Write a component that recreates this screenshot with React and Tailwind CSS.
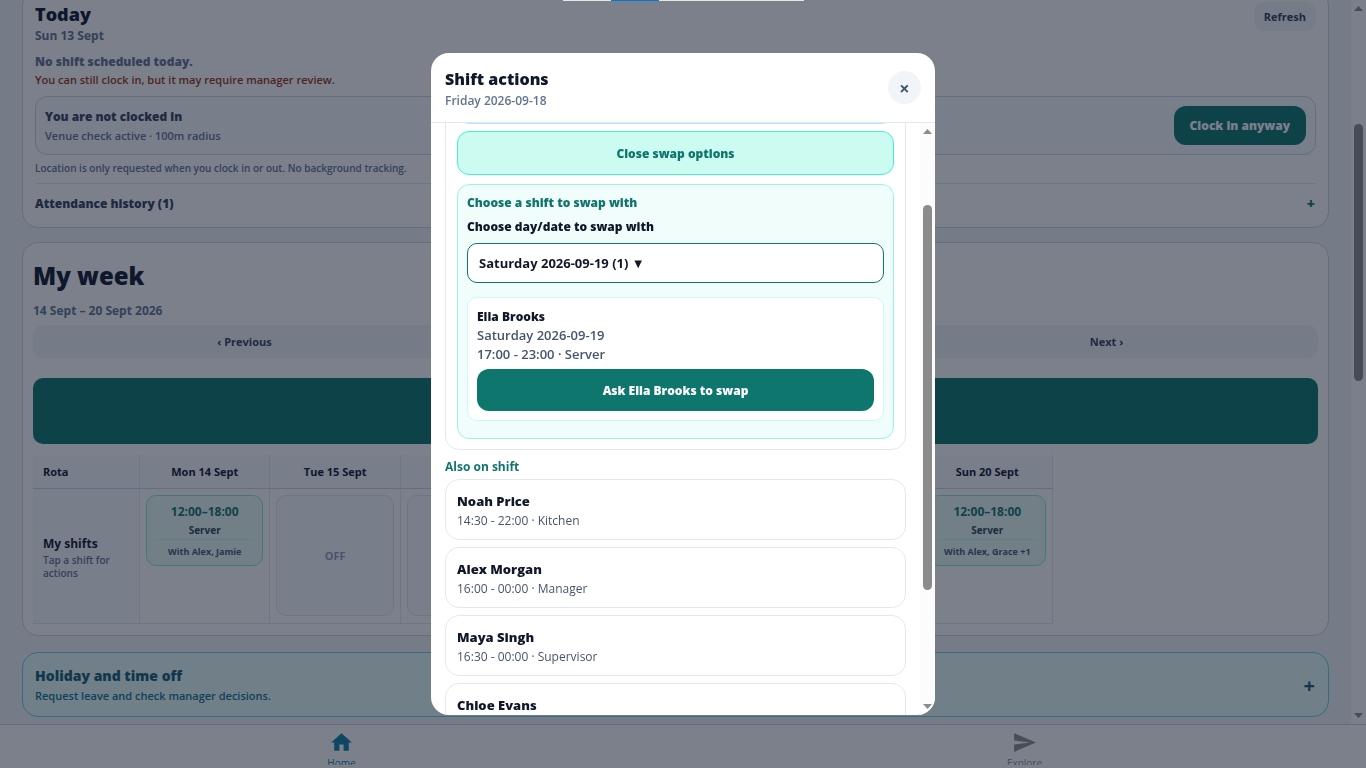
import React, { useState } from 'react';
import { MdHome, MdSend } from 'react-icons/md';

const days = [
  { label: 'Mon 14 Sept', time: '12:00–18:00', role: 'Server', team: 'With Alex, Jamie' },
  { label: 'Tue 15 Sept' },
  { label: 'Wed 16 Sept' },
  { label: 'Thu 17 Sept' },
  { label: 'Fri 18 Sept' },
  { label: 'Sat 19 Sept' },
  { label: 'Sun 20 Sept', time: '12:00–18:00', role: 'Server', team: 'With Alex, Grace +1' },
];

const coworkers = [
  { name: 'Noah Price', detail: '14:30 - 22:00 · Kitchen' },
  { name: 'Alex Morgan', detail: '16:00 - 00:00 · Manager' },
  { name: 'Maya Singh', detail: '16:30 - 00:00 · Supervisor' },
  { name: 'Chloe Evans', detail: '17:00 - 23:00 · Server' },
];

const ScrollArrow = ({ down }) => (
  <svg viewBox="0 0 9 5" className={`h-[5px] w-[9px] shrink-0 fill-[#8b8b8b] ${down ? 'rotate-180' : ''}`}>
    <path d="M4.5 0 9 5H0z" />
  </svg>
);

const TodayCard = () => (
  <section className="rounded-2xl border border-[#cbd5e1] bg-white p-3">
    <div className="flex items-start justify-between">
      <div>
        <h2 className="text-lg leading-6 font-extrabold text-slate-900">Today</h2>
        <p className="text-xs leading-5 font-bold text-slate-500">Sun 13 Sept</p>
      </div>
      <button className="rounded-[10px] bg-slate-100 px-[10px] text-[11px] leading-[29px] font-bold text-slate-700">
        Refresh
      </button>
    </div>

    <p className="mt-[7px] text-xs leading-[18px] font-extrabold text-slate-500">No shift scheduled today.</p>
    <p className="text-[11px] leading-[18px] font-semibold text-[#9a3412]">
      You can still clock in, but it may require manager review.
    </p>

    <div className="mt-[7px] flex items-center justify-between rounded-xl border border-[#cbd5e1] bg-slate-50 p-[9px]">
      <div>
        <p className="text-xs leading-[19px] font-extrabold text-slate-700">You are not clocked in</p>
        <p className="text-[11px] leading-[19px] font-semibold text-slate-500">Venue check active · 100m radius</p>
      </div>
      <button className="rounded-xl bg-[#0f766e] px-4 text-xs leading-[39px] font-extrabold text-white">
        Clock in anyway
      </button>
    </div>

    <p className="mt-[5px] text-[10px] leading-4 font-semibold text-slate-500">
      Location is only requested when you clock in or out. No background tracking.
    </p>

    <button className="mt-[7px] flex w-full items-center justify-between border-t border-slate-200 pt-[9px] pr-px text-xs leading-[22px] font-extrabold text-slate-700">
      <span>Attendance history (1)</span>
      <span className="text-sm leading-[22px] text-[#0f766e]">+</span>
    </button>
  </section>
);

const DayCell = ({ day }) => {
  if (!day.time) {
    return (
      <div className="flex h-[121px] items-center justify-center rounded-[10px] border border-slate-200 bg-slate-50 pt-[2px] text-[11px] font-bold text-slate-400">
        OFF
      </div>
    );
  }

  return (
    <button className="block h-[71px] w-full rounded-[10px] border border-[#86efc5] bg-[#ecfdf5] px-[7px] pt-[3px]">
      <span className="block text-xs leading-[18px] font-bold text-[#0f766e]">{day.time}</span>
      <span className="block text-[10px] leading-[18px] font-bold text-slate-700">{day.role}</span>
      <span className="block border-t border-[#ccfbf1] pt-[3px] text-[9px] leading-[18px] font-bold text-slate-600">
        {day.team}
      </span>
    </button>
  );
};

const WeekCard = () => (
  <section className="mt-[14px] rounded-2xl border border-[#cbd5e1] bg-white px-[10px] pb-[11px]">
    <h2 className="pt-[15px] text-2xl leading-9 font-extrabold text-slate-900">My week</h2>
    <p className="mt-2 text-xs leading-[18px] font-bold text-slate-500">14 Sept – 20 Sept 2026</p>

    <div className="mt-[5px] grid grid-cols-3 gap-2 text-[11px] leading-[33px] font-bold text-slate-700">
      <button className="rounded-[10px] bg-slate-100">‹ Previous</button>
      <button className="col-start-3 rounded-[10px] bg-slate-100">Next ›</button>
    </div>

    <div className="mt-5 h-[66px] rounded-[10px] bg-[#0f766e]" />

    <table className="mt-[11px] w-[1020px] table-fixed border-separate border-spacing-0">
      <thead>
        <tr className="bg-slate-50 text-[11px] text-slate-900">
          <th className="h-[34px] w-[107px] border-r border-b border-slate-200 border-b-slate-300 pt-[2px] pl-[10px] text-left font-bold">
            Rota
          </th>
          {days.map((day) => (
            <th key={day.label} className="border-r border-b border-slate-200 border-b-slate-300 pt-[2px] font-bold">
              {day.label}
            </th>
          ))}
        </tr>
      </thead>
      <tbody>
        <tr>
          <th className="h-[135px] border-r border-b border-slate-200 bg-slate-50 pt-[2px] pl-[10px] text-left">
            <p className="text-xs leading-[18px] font-bold text-slate-900">My shifts</p>
            <p className="mt-px text-[10px] leading-[13px] font-semibold text-slate-500">
              Tap a shift for
              <br />
              actions
            </p>
          </th>
          {days.map((day) => (
            <td key={day.label} className="border-r border-b border-slate-200 p-[6px] align-top">
              <DayCell day={day} />
            </td>
          ))}
        </tr>
      </tbody>
    </table>
  </section>
);

const HolidayCard = () => (
  <section className="mt-4 flex h-[65px] items-center justify-between rounded-2xl border border-[#67d3e0] bg-[#e8fcfb] px-3 pt-[2px]">
    <div>
      <h2 className="text-sm leading-5 font-extrabold text-[#155e75]">Holiday and time off</h2>
      <p className="text-[11px] leading-5 font-semibold text-[#0e7490]">Request leave and check manager decisions.</p>
    </div>
    <button className="pr-px text-xl font-bold text-[#155e75]" aria-label="Open holiday and time off">
      +
    </button>
  </section>
);

const BottomNav = () => (
  <nav className="grid h-11 shrink-0 grid-cols-2 border-t border-slate-300 bg-white text-[10px] leading-4">
    <a href="#home" className="flex h-10 flex-col items-center overflow-hidden pt-[5px] text-[#0e7fa8]">
      <MdHome className="size-[25px] shrink-0" />
      <span>Home</span>
    </a>
    <a href="#explore" className="flex h-10 flex-col items-center overflow-hidden pt-[5px] text-[#8e8e8e]">
      <MdSend className="size-[25px] shrink-0" />
      <span>Explore</span>
    </a>
  </nav>
);

const ShiftModal = () => {
  const [swapDate, setSwapDate] = useState('2026-09-19');

  return (
    <div
      role="dialog"
      aria-label="Shift actions"
      className="flex h-[calc(100vh-106px)] w-full max-w-[504px] flex-col overflow-hidden rounded-[18px] bg-white"
    >
      <header className="flex h-[70px] shrink-0 items-center justify-between border-b border-slate-200 px-[14px]">
        <div className="pt-[2px]">
          <h2 className="text-base leading-6 font-extrabold text-slate-900">Shift actions</h2>
          <p className="text-xs leading-5 font-semibold text-slate-500">Friday 2026-09-18</p>
        </div>
        <button
          aria-label="Close"
          className="flex size-[33px] items-center justify-center rounded-full bg-slate-100 pt-px text-lg font-bold text-slate-600"
        >
          ×
        </button>
      </header>

      <div className="flex min-h-0 flex-1">
        <div className="flex-1 overflow-hidden px-[14px]">
          <div className="-mt-[55px] rounded-[14px] border border-slate-200 px-[11px] pt-[11px] pb-[10px]">
            <div className="h-11 rounded-xl border border-sky-200 bg-sky-50" />
            <button className="mt-[7px] h-11 w-full rounded-xl border border-teal-300 bg-teal-100 pt-[2px] text-xs font-extrabold text-[#0f766e]">
              Close swap options
            </button>

            <div className="mt-[9px] rounded-xl border border-teal-200 bg-teal-50 px-[9px] pt-[9px] pb-[17px]">
              <p className="text-xs leading-[18px] font-extrabold text-[#0f766e]">Choose a shift to swap with</p>
              <label htmlFor="swap-date" className="mt-[6px] block text-xs leading-[18px] font-extrabold text-slate-900">
                Choose day/date to swap with
              </label>
              <select
                id="swap-date"
                value={swapDate}
                onChange={(e) => setSwapDate(e.target.value)}
                className="mt-[7px] block h-10 w-full appearance-none rounded-[10px] border border-[#0f766e] bg-white px-[11px] pt-[2px] text-[13px] font-bold text-slate-900"
              >
                <option value="2026-09-19">Saturday 2026-09-19 (1) ▼</option>
              </select>

              <div className="mt-[14px] rounded-[10px] border border-teal-100 bg-white p-[9px] text-[13px] leading-[19px]">
                <p className="text-xs leading-[19px] font-extrabold text-slate-900">Ella Brooks</p>
                <p className="font-semibold text-slate-600">Saturday 2026-09-19</p>
                <p className="font-semibold text-slate-600">17:00 - 23:00 · Server</p>
                <button className="mt-[5px] h-[42px] w-full rounded-xl bg-[#0f766e] pt-[2px] text-xs font-extrabold text-white">
                  Ask Ella Brooks to swap
                </button>
              </div>
            </div>
          </div>

          <h3 className="mt-2 mb-[3px] text-xs leading-[18px] font-bold text-[#0f766e]">Also on shift</h3>
          <ul className="flex flex-col gap-[7px]">
            {coworkers.map((person) => (
              <li key={person.name} className="rounded-[14px] border border-slate-200 px-[11px] pt-[11px] pb-2">
                <p className="text-[13px] leading-5 font-extrabold text-slate-900">{person.name}</p>
                <p className="text-xs leading-5 text-slate-600">{person.detail}</p>
              </li>
            ))}
          </ul>
        </div>

        {/* Scrollbar */}
        <div className="flex w-[15px] shrink-0 flex-col items-center bg-[#fcfcfc] py-[6px]">
          <ScrollArrow />
          <div className="mt-[71px] h-[385px] w-[9px] rounded-full bg-[#8b8b8b]" />
          <div className="flex-1" />
          <ScrollArrow down />
        </div>
      </div>
    </div>
  );
};

const App = () => {
  return (
    <div className="flex h-screen flex-col overflow-hidden bg-[#f1f5f9] font-['Open_Sans',sans-serif]">
      <div className="flex min-h-0 flex-1">
        <main className="flex-1 overflow-hidden px-[22px]">
          <div className="-mt-[11px]">
            <TodayCard />
            <WeekCard />
            <HolidayCard />
          </div>
        </main>

        {/* Page scrollbar */}
        <div className="flex w-[15px] shrink-0 flex-col items-center bg-[#fcfcfc] py-[6px]">
          <ScrollArrow />
          <div className="mt-[113px] h-[257px] w-[9px] rounded-full bg-[#8b8b8b]" />
          <div className="flex-1" />
          <ScrollArrow down />
        </div>
      </div>

      <BottomNav />

      {/* Dimmed backdrop with the dialog on top */}
      <div className="fixed inset-0 flex items-center justify-center bg-slate-900/55">
        <ShiftModal />
      </div>

      <div className="fixed top-0 left-[563px] flex h-px w-[241px] bg-[#e3e6e3]">
        <div className="ml-12 w-12 bg-[#0078d7]" />
      </div>
    </div>
  );
};

export default App;
